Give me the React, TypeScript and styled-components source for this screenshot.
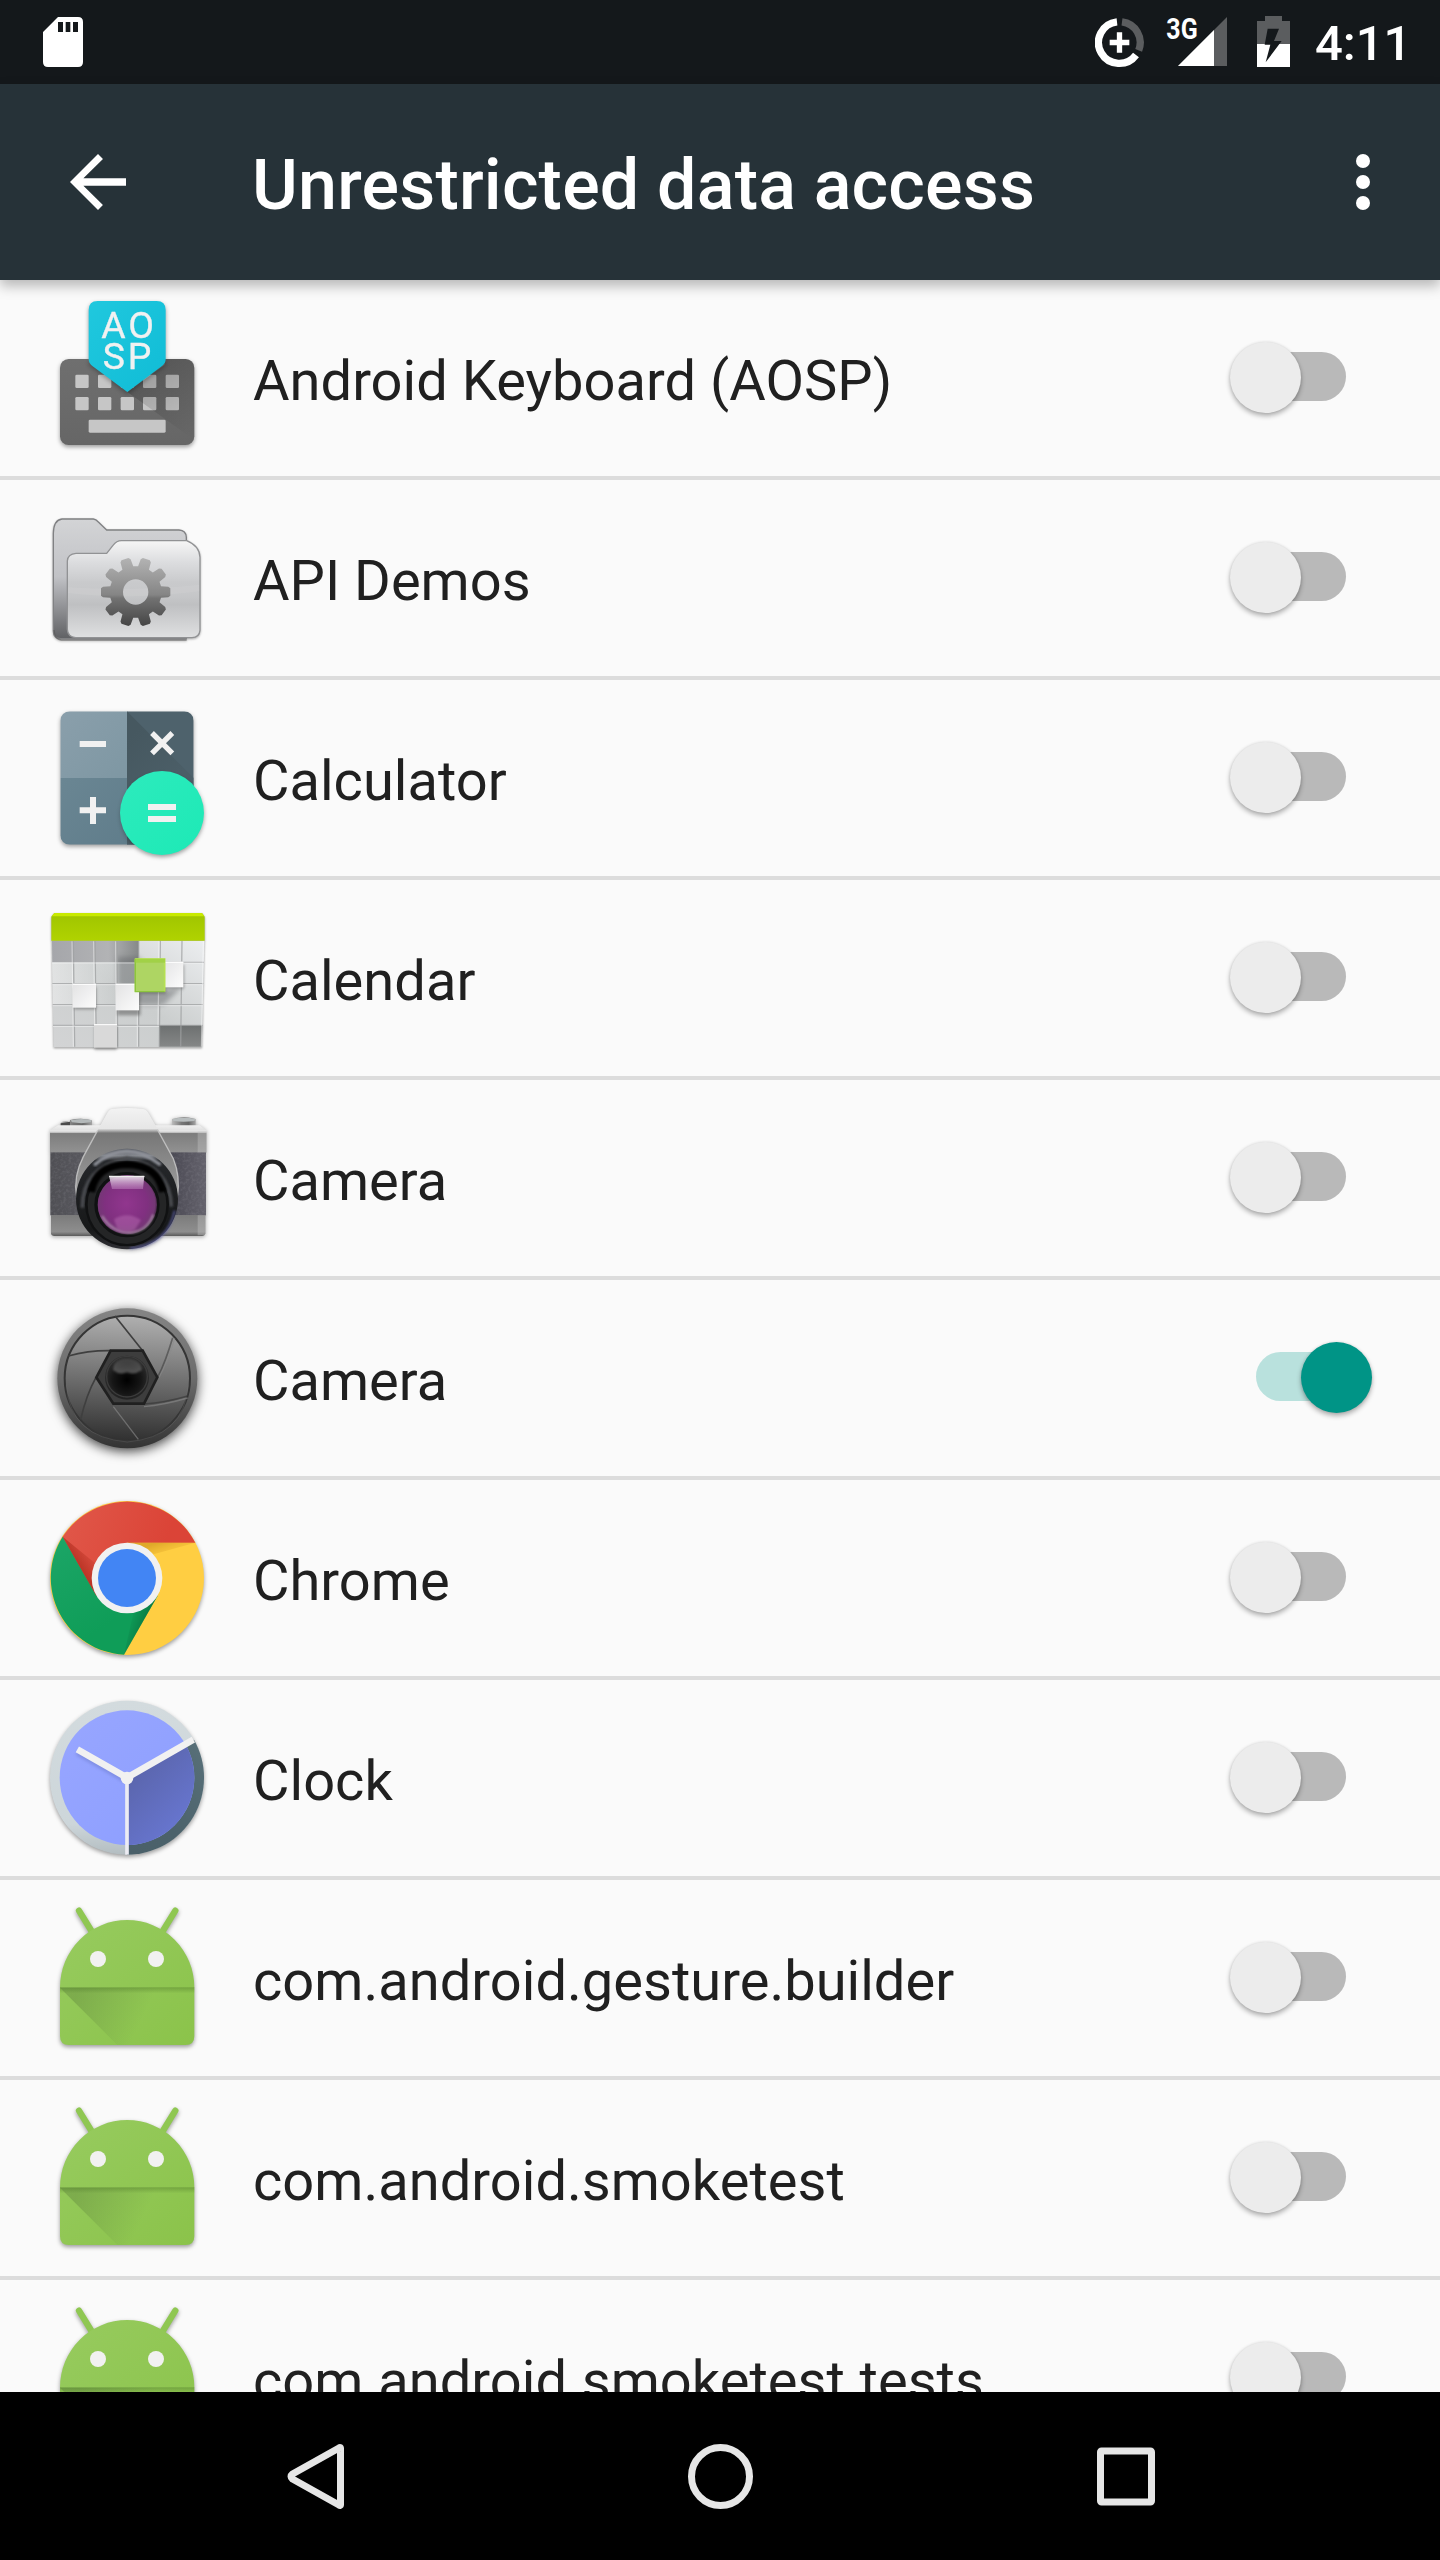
import React from 'react';
import styled, { createGlobalStyle } from 'styled-components';

const GlobalStyle = createGlobalStyle`
  * { box-sizing: border-box; }
  body { margin: 0; background: #fafafa; }
`;

const Screen = styled.div`
  width: 1440px;
  height: 2560px;
  display: flex;
  flex-direction: column;
  overflow: hidden;
  background: #fafafa;
  color: #202020;
  font-family: Roboto, 'Noto Sans', sans-serif;
`;

const StatusBar = styled.header`
  flex: none;
  height: 84px;
  display: flex;
  justify-content: space-between;
  padding-left: 43px;
  background: #14181b;
  color: #fff;
`;

const StatusIcons = styled.div`
  display: flex;
  width: 345px;
`;

const StatusGlyph = styled.svg<{ $w: number; $gap?: number }>`
  flex: none;
  width: ${(p) => p.$w}px;
  height: 84px;
  margin-right: ${(p) => p.$gap ?? 0}px;
`;

const Time = styled.span`
  font-size: 49px;
  font-weight: 500;
  line-height: 84px;
  padding-top: 2px;
`;

const Toolbar = styled.div`
  flex: none;
  position: relative;
  z-index: 1;
  height: 196px;
  display: flex;
  align-items: center;
  padding: 0 35px 0 56px;
  background: #263238;
  color: #fff;
  box-shadow: 0 6px 12px rgba(0, 0, 0, 0.27);
`;

const ToolButton = styled.button`
  flex: none;
  display: block;
  width: 84px;
  height: 84px;
  padding: 0;
  border: 0;
  background: none;
  color: inherit;
  svg { display: block; width: 84px; height: 84px; fill: currentColor; }
`;

const Title = styled.h1`
  flex: 1;
  margin: 0 0 0 112px;
  padding-top: 6px;
  font-size: 70px;
  font-weight: 500;
  letter-spacing: 0.2px;
  line-height: 82px;
  white-space: nowrap;
`;

const List = styled.ul`
  flex: 1;
  min-height: 0;
  overflow: hidden;
  margin: 0;
  padding: 0;
  list-style: none;
`;

const Row = styled.li`
  height: 200px;
  display: flex;
  align-items: center;
  padding: 0 67px 0 30px;
  border-bottom: 4px solid #dcdcdc;
`;

const AppIcon = styled.svg<{ $shadow?: string }>`
  flex: none;
  width: 200px;
  height: 196px;
  filter: ${(p) => p.$shadow ?? 'drop-shadow(0 2px 2px rgba(0,0,0,.38))'};
`;

const Label = styled.span`
  flex: 1;
  margin-left: 23px;
  padding-top: 6px;
  font-size: 56px;
  letter-spacing: 0.03px;
  line-height: 66px;
  white-space: nowrap;
`;

const Toggle = styled.button`
  flex: none;
  position: relative;
  display: flex;
  align-items: flex-start;
  justify-content: center;
  width: 144px;
  height: 72px;
  margin-bottom: 2px;
  padding: 11px 0 0;
  border: 0;
  background: none;
`;

const Track = styled.span<{ $on: boolean }>`
  width: 90px;
  height: 49px;
  border-radius: 25px;
  background: ${(p) => (p.$on ? '#b9e1dd' : '#b9b9b9')};
`;

const Thumb = styled.span<{ $on: boolean }>`
  position: absolute;
  top: 0.7px;
  ${(p) => (p.$on ? 'right: 1px' : 'left: 1px')};
  width: 71px;
  height: 71px;
  border-radius: 50%;
  background: ${(p) => (p.$on ? '#009486' : '#ececec')};
  box-shadow: 0 3px 5px rgba(0, 0, 0, 0.3), 0 0 3px rgba(0, 0, 0, 0.1);
`;

const NavBar = styled.nav`
  flex: none;
  height: 168px;
  display: flex;
  align-items: center;
  justify-content: center;
  gap: 321px;
  background: #000;
`;

const NavGlyph = styled.svg`
  width: 84px;
  height: 84px;
  fill: none;
  stroke: #e6e6e6;
  stroke-width: 7;
  stroke-linejoin: round;
`;

function gearPath(cx: number, cy: number): string {
  const parts: string[] = [];
  const at = (r: number, offset: number, a: number) => {
    const x = cx + r * Math.cos(a) - offset * Math.sin(a);
    const y = cy + r * Math.sin(a) + offset * Math.cos(a);
    return `${x.toFixed(1)} ${y.toFixed(1)}`;
  };
  for (let i = 0; i < 10; i++) {
    const a = (i * Math.PI) / 5;
    parts.push(at(76, -17, a), at(98, -16, a), at(104, -11, a), at(104, 11, a), at(98, 16, a), at(76, 17, a));
  }
  return `M${parts.join('L')}Z M${cx + 38} ${cy}a38 38 0 1 0 -76 0a38 38 0 1 0 76 0Z`;
}

const Keyboard = () => (
  <AppIcon viewBox="0 -15 600 588">
    <defs>
      <linearGradient id="kbBase" x1="0" y1="0" x2="0" y2="1"><stop offset="0" stopColor="#6f6f6f" /><stop offset="1" stopColor="#666" /></linearGradient>
      <linearGradient id="kbShade" gradientUnits="userSpaceOnUse" x1="350" y1="240" x2="480" y2="460"><stop offset="0" stopColor="#000" stopOpacity=".22" /><stop offset="1" stopColor="#000" stopOpacity="0" /></linearGradient>
      <linearGradient id="kbTag" x1="0" y1="0" x2="1" y2="1"><stop offset="0" stopColor="#20c8de" /><stop offset="1" stopColor="#10bcd6" /></linearGradient>
      <filter id="kbBlur" x="-20%" y="-20%" width="140%" height="140%"><feGaussianBlur stdDeviation="7" /></filter>
      <clipPath id="kbClip"><rect x="90" y="222" width="403" height="258" rx="26" /></clipPath>
    </defs>
    <rect x="90" y="222" width="403" height="258" rx="26" fill="url(#kbBase)" />
    <g fill="#c6c6c6">
      {[136, 204, 272, 339, 407].map((x) => <rect key={x} x={x} y="269" width="40" height="40" rx="4" />)}
      {[136, 204, 272, 339, 407].map((x) => <rect key={x} x={x} y="336" width="40" height="40" rx="4" />)}
      <rect x="176" y="404" width="231" height="39" rx="4" />
    </g>
    <g clipPath="url(#kbClip)">
      <path d="M292 321L493 465V222H404V240Z" fill="url(#kbShade)" />
      <path d="M176 227V241L292 329L407 241V227Z" fill="#000" opacity=".28" filter="url(#kbBlur)" />
    </g>
    <path d="M203 48H380Q407 48 407 75V222Q407 235 397 242L292 321L186 242Q176 235 176 222V75Q176 48 203 48Z" fill="url(#kbTag)" />
    <g fill="#f1f1f1" stroke="#f1f1f1" strokeWidth="1" fontFamily="Roboto, sans-serif" fontSize="112">
      <text x="214 295" y="160">AO</text>
      <text x="218 293" y="251">SP</text>
    </g>
  </AppIcon>
);

const Folder = () => (
  <AppIcon viewBox="0 -30 600 588" $shadow="drop-shadow(0 1px 1px rgba(0,0,0,.3))">
    <defs>
      <linearGradient id="fdBack" x1="0" y1="0" x2="0" y2="1"><stop offset="0" stopColor="#d3d4d6" /><stop offset=".48" stopColor="#c1c2c6" /><stop offset="1" stopColor="#606164" /></linearGradient>
      <linearGradient id="fdFront" x1="0" y1="0" x2="0" y2="1"><stop offset="0" stopColor="#f6f6f6" /><stop offset=".22" stopColor="#dcdddf" /><stop offset=".43" stopColor="#c9cacc" /><stop offset=".56" stopColor="#c6c7c9" /><stop offset=".66" stopColor="#bfc0c2" /><stop offset="1" stopColor="#dfe0e1" /></linearGradient>
      <linearGradient id="fdGear" gradientUnits="userSpaceOnUse" x1="0" y1="202" x2="0" y2="410"><stop offset="0" stopColor="#b4b4b4" /><stop offset=".54" stopColor="#858585" /><stop offset=".59" stopColor="#727272" /><stop offset="1" stopColor="#444" /></linearGradient>
    </defs>
    <path d="M96 87H190Q198 88 205 96L230 120H447Q468 121 469 142V446H92Q70 445 70 423V130Q71 90 96 87Z" fill="url(#fdBack)" stroke="#808183" strokeWidth="4" />
    <path d="M72 420Q73 448 94 450H470" fill="none" stroke="#555" strokeWidth="4" opacity=".6" />
    <path d="M138 190H230L249 166Q260 152 274 152H470Q509 168 510 202V421Q508 442 486 443H137Q113 441 112 418V213Q113 192 138 190Z" fill="url(#fdFront)" stroke="#919294" strokeWidth="4" />
    <path d="M114 309Q300 332 508 304V285Q300 304 114 292Z" fill="#fff" opacity=".07" />
    <path d={gearPath(317, 306)} fill="url(#fdGear)" fillRule="evenodd" />
  </AppIcon>
);

const Calculator = () => (
  <AppIcon viewBox="0 -30 600 588">
    <defs>
      <clipPath id="calcClip"><rect x="91" y="64" width="400" height="400" rx="28" /></clipPath>
      <linearGradient id="calcDark" gradientUnits="userSpaceOnUse" x1="291" y1="150" x2="420" y2="280"><stop offset="0" stopColor="#465860" /><stop offset="1" stopColor="#4b5e67" /></linearGradient>
      <linearGradient id="calcA" x1="0" y1="0" x2="1" y2="1"><stop offset="0" stopColor="#8a9fab" /><stop offset="1" stopColor="#7e97a3" /></linearGradient>
      <linearGradient id="calcB" x1="0" y1="0" x2="1" y2="1"><stop offset="0" stopColor="#6a8693" /><stop offset="1" stopColor="#607d8b" /></linearGradient>
      <linearGradient id="calcG" x1="0" y1="0" x2="1" y2="1"><stop offset="0" stopColor="#2debbd" /><stop offset="1" stopColor="#1de9b6" /></linearGradient>
      <filter id="calcBlur" x="-20%" y="-20%" width="140%" height="140%"><feGaussianBlur stdDeviation="7" /></filter>
    </defs>
    <g clipPath="url(#calcClip)">
      <rect x="91" y="64" width="200" height="200" fill="url(#calcA)" />
      <rect x="91" y="264" width="200" height="200" fill="url(#calcB)" />
      <rect x="291" y="64" width="200" height="400" fill="#4e626c" />
      <path d="M291 64L491 264V464H291Z" fill="url(#calcDark)" />
      <circle cx="396" cy="376" r="125" fill="#000" opacity=".25" filter="url(#calcBlur)" />
    </g>
    <circle cx="396" cy="369" r="126" fill="url(#calcG)" />
    <g fill="none" stroke="#f1f1f1" strokeWidth="18">
      <path d="M149 162H228M149 361H228M189 321V402M354 351H438M354 387H438" />
      <path d="M366 129L427 190M427 129L366 190" strokeWidth="16" />
    </g>
  </AppIcon>
);

const Calendar = () => (
  <AppIcon viewBox="0 -30 600 588" $shadow="drop-shadow(0 1px 1px rgba(0,0,0,.4))">
    <defs>
      <linearGradient id="calBody" x1="1" y1="0" x2="0" y2="1"><stop offset="0" stopColor="#eceef0" /><stop offset=".5" stopColor="#cbcece" /><stop offset="1" stopColor="#d3d4d5" /></linearGradient>
      <linearGradient id="calLeft" x1="0" y1="0" x2="1" y2="0"><stop offset="0" stopColor="#fff" stopOpacity=".4" /><stop offset="1" stopColor="#b5baba" stopOpacity=".45" /></linearGradient>
      <linearGradient id="calTop" x1="0" y1="0" x2="0" y2="1"><stop offset="0" stopColor="#9fc400" /><stop offset="1" stopColor="#b0d300" /></linearGradient>
      <linearGradient id="calGrey" x1="0" y1="0" x2="1" y2="0"><stop offset="0" stopColor="#a5a6aa" /><stop offset=".65" stopColor="#b2b3b5" /><stop offset="1" stopColor="#868989" /></linearGradient>
      <linearGradient id="calWhite" x1="0" y1="0" x2="1" y2="1"><stop offset="0" stopColor="#e2e2e3" /><stop offset="1" stopColor="#fcfcfc" /></linearGradient>
      <linearGradient id="calDark" x1="0" y1="0" x2="0" y2="1"><stop offset="0" stopColor="#6d7070" /><stop offset="1" stopColor="#858787" /></linearGradient>
      <filter id="calBlur" x="-30%" y="-30%" width="160%" height="160%"><feGaussianBlur stdDeviation="8" /></filter>
      <filter id="calSoft" x="-30%" y="-30%" width="160%" height="160%"><feGaussianBlur stdDeviation="4" /></filter>
    </defs>
    <path d="M65 152H523L516 472H71Z" fill="url(#calBody)" />
    <path d="M66 217H325V345H68Z" fill="url(#calLeft)" />
    <path d="M66 152H326V217H67Z" fill="url(#calGrey)" />
    <path d="M387 406H517L515 470H388Z" fill="url(#calDark)" />
    <path d="M262 200H325L400 300L456 292L400 345H335L262 281Z" fill="#5d6163" opacity=".45" filter="url(#calBlur)" />
    <g fill="none" stroke="#9fa1a2" strokeWidth="4" opacity=".75">
      <path d="M130 152L134 470M195 152L199 470M261 152L263 470M326 152V470M391 152L388 470M456 152L452 470" />
      <path d="M67 281H520M68 344H519M69 406H518" />
      <path d="M326 217H522" />
    </g>
    <g fill="none" stroke="#fff" strokeWidth="3" opacity=".5">
      <path d="M67 219H520M67 284H520M68 347H519M69 409H387" />
      <path d="M126 154L130 470M191 154L195 470M257 154L259 470M322 217V470M387 154L384 406M520 154L514 470" />
    </g>
    <g fill="#555" opacity=".5" filter="url(#calSoft)">
      <rect x="132" y="292" width="67" height="66" /><rect x="262" y="300" width="70" height="76" />
      <rect x="322" y="222" width="86" height="90" /><rect x="404" y="224" width="58" height="72" /><rect x="194" y="408" width="66" height="68" />
    </g>
    <rect x="128" y="281" width="70" height="72" fill="url(#calWhite)" />
    <rect x="257" y="281" width="70" height="80" fill="url(#calWhite)" />
    <rect x="390" y="215" width="70" height="77" fill="url(#calWhite)" />
    <rect x="192" y="402" width="69" height="71" fill="#d9d9d9" />
    <path d="M128 283H198M257 283H327M192 404H261M404 217H460" stroke="#fff" strokeWidth="3" />
    <rect x="314" y="205" width="91" height="101" fill="#aed563" />
    <path d="M316 207H404V305" fill="none" stroke="#b5e052" strokeWidth="5" />
    <path d="M316 207V305H404" fill="none" stroke="#8dc63c" strokeWidth="4" />
    <path d="M314 207H405V218H314Z" fill="#9bcf3c" opacity=".7" />
    <path d="M73 69H516L524 80V152H64V80Z" fill="url(#calTop)" />
    <path d="M73 69H516L523 79H65Z" fill="#c8ea00" />
  </AppIcon>
);

const FilmCamera = () => (
  <AppIcon viewBox="0 -30 600 588" $shadow="drop-shadow(0 1px 2px rgba(0,0,0,.35))">
    <defs>
      <linearGradient id="fcTop" x1="0" y1="0" x2="0" y2="1"><stop offset="0" stopColor="#f0f0f0" /><stop offset=".2" stopColor="#dedede" /><stop offset=".3" stopColor="#7d7d7d" /><stop offset="1" stopColor="#929292" /></linearGradient>
      <linearGradient id="fcBand" x1="0" y1="0" x2="1" y2="0"><stop offset="0" stopColor="#4f4f54" /><stop offset=".3" stopColor="#5c5b62" /><stop offset=".78" stopColor="#4b4a54" /><stop offset="1" stopColor="#64626c" /></linearGradient>
      <linearGradient id="fcPrism" gradientUnits="userSpaceOnUse" x1="0" y1="55" x2="0" y2="330"><stop offset="0" stopColor="#f2f2f2" /><stop offset=".22" stopColor="#e6e6e6" /><stop offset=".27" stopColor="#777" /><stop offset="1" stopColor="#a2a2a2" /></linearGradient>
      <linearGradient id="fcRing" x1="0" y1="0" x2="0" y2="1"><stop offset="0" stopColor="#4e5158" /><stop offset=".07" stopColor="#85888e" /><stop offset=".12" stopColor="#25272a" /><stop offset=".8" stopColor="#171819" /><stop offset="1" stopColor="#303035" /></linearGradient>
      <radialGradient id="fcGlass" cx=".48" cy=".48" r=".55"><stop offset="0" stopColor="#91368e" /><stop offset=".65" stopColor="#803080" /><stop offset=".88" stopColor="#743775" /><stop offset="1" stopColor="#2e202e" /></radialGradient>
      <linearGradient id="fcFlash" x1="0" y1="0" x2="0" y2="1"><stop offset="0" stopColor="#e5dce5" /><stop offset="1" stopColor="#c58dc6" stopOpacity=".45" /></linearGradient>
      <linearGradient id="fcFoot" x1="0" y1="0" x2="0" y2="1"><stop offset="0" stopColor="#7b7b7b" /><stop offset=".8" stopColor="#8e8e8e" /><stop offset="1" stopColor="#5a5a5a" /></linearGradient>
      <linearGradient id="fcKnob" x1="0" y1="0" x2="1" y2="0"><stop offset="0" stopColor="#bbb" /><stop offset=".4" stopColor="#777" /><stop offset=".7" stopColor="#666" /><stop offset="1" stopColor="#a5a5a5" /></linearGradient>
      <filter id="fcGrain" x="0" y="0" width="100%" height="100%"><feTurbulence type="fractalNoise" baseFrequency=".12" numOctaves="2" /><feColorMatrix values="0 0 0 0 .7 0 0 0 0 .7 0 0 0 0 .75 1.2 0 0 0 -.5" /></filter>
      <filter id="fcBlur"><feGaussianBlur stdDeviation="3" /></filter>
    </defs>
    <path d="M92 98Q105 90 120 98V90Q155 82 186 91V112H92Z" fill="url(#fcKnob)" />
    <path d="M122 91Q155 83 185 91L182 97Q155 102 126 97Z" fill="#b4b9ba" />
    <path d="M92 100L120 95V114H92Z" fill="#4a4a4a" />
    <path d="M426 87Q462 76 497 87V110H426Z" fill="url(#fcKnob)" />
    <path d="M427 87Q462 79 497 87L493 93Q460 98 430 93Z" fill="#b8bdbe" />
    <path d="M84 106H508L529 121V188H60V121Z" fill="url(#fcTop)" />
    <path d="M60 121H529V128H60Z" fill="#eee" opacity=".55" />
    <rect x="61" y="187" width="467" height="189" fill="url(#fcBand)" />
    <rect x="61" y="187" width="467" height="189" filter="url(#fcGrain)" opacity=".2" />
    <path d="M63 375H526V430Q525 438 516 438H73Q64 438 63 430Z" fill="url(#fcFoot)" />
    <path d="M503 123H528V187H503ZM503 376H525V436H503Z" fill="#ccc" opacity=".35" />
    <path d="M245 57Q291 51 340 57Q350 59 357 72L395 138L430 206Q452 260 442 330L140 330Q129 260 160 200L203 121L230 72Q237 59 245 57Z" fill="url(#fcPrism)" />
    <path d="M140 320Q129 260 160 200L203 121M442 320Q452 260 430 206L382 118" fill="none" stroke="#c9c9c9" strokeWidth="4" opacity=".85" />
    <ellipse cx="291" cy="327" rx="153" ry="151" fill="url(#fcRing)" />
    <path d="M434 362Q413 464 300 475" fill="none" stroke="#5d5fa4" strokeWidth="7" opacity=".7" filter="url(#fcBlur)" />
    <path d="M192 226Q288 142 392 225" fill="none" stroke="#8f929a" strokeWidth="10" filter="url(#fcBlur)" />
    <path d="M157 353Q156 233 291 204Q421 230 424 350" fill="none" stroke="#4a4c50" strokeWidth="11" filter="url(#fcBlur)" />
    <circle cx="291" cy="343" r="126" fill="#101112" />
    <circle cx="291" cy="344" r="108" fill="none" stroke="#2b2c2e" strokeWidth="20" opacity=".75" />
    <path d="M184 306Q196 226 291 223Q386 226 398 306" fill="none" stroke="#000" strokeWidth="22" filter="url(#fcBlur)" />
    <circle cx="292" cy="344" r="89" fill="url(#fcGlass)" />
    <path d="M216 378Q249 431 306 428Q354 422 370 374" fill="none" stroke="#c9b5c8" strokeWidth="7" opacity=".6" filter="url(#fcBlur)" />
    <path d="M252 388Q292 362 333 390L314 420Q288 429 262 417Z" fill="#c278bc" opacity=".4" filter="url(#fcBlur)" />
    <path d="M237 258H343L339 297H246Z" fill="url(#fcFlash)" />
    <path d="M237 259H343" stroke="#f0f0f0" strokeWidth="4" />
  </AppIcon>
);

const Aperture = () => (
  <AppIcon viewBox="0 -30 600 588" $shadow="drop-shadow(0 3px 6px rgba(0,0,0,.75))">
    <defs>
      <linearGradient id="apRim" x1="0" y1="0" x2="0" y2="1"><stop offset="0" stopColor="#858585" /><stop offset=".5" stopColor="#6c6c6c" /><stop offset="1" stopColor="#333" /></linearGradient>
      <linearGradient id="apFace" x1=".55" y1="0" x2=".5" y2="1"><stop offset="0" stopColor="#b0b0b0" /><stop offset=".4" stopColor="#7d7d7d" /><stop offset="1" stopColor="#303030" /></linearGradient>
      <radialGradient id="apLens" cx=".5" cy=".55" r=".5"><stop offset="0" stopColor="#000" /><stop offset=".65" stopColor="#161616" /><stop offset="1" stopColor="#2b2b2b" /></radialGradient>
      <linearGradient id="apGlint" x1="0" y1="0" x2="0" y2="1"><stop offset="0" stopColor="#777" stopOpacity=".3" /><stop offset="1" stopColor="#aaa" stopOpacity=".45" /></linearGradient>
      <filter id="apBlur"><feGaussianBlur stdDeviation="3" /></filter>
    </defs>
    <circle cx="292" cy="265" r="210" fill="url(#apRim)" />
    <circle cx="292" cy="265" r="188" fill="url(#apFace)" stroke="#353535" strokeWidth="6" />
    <path d="M109 286Q121 442 292 456Q462 442 475 286" fill="none" stroke="#777" strokeWidth="3" opacity=".3" />
    <g fill="none" stroke="#3f3f3f" strokeWidth="5">
      <path d="M255 78L338 182M115 198Q176 181 242 182M198 262Q169 314 152 388" />
      <path d="M428 143Q407 214 383 262" opacity=".6" />
    </g>
    <g fill="none" stroke="#8b8b8b" strokeWidth="4" opacity=".6">
      <path d="M434 145Q413 216 386 264M473 324Q400 345 342 350M250 350L325 448" />
      <path d="M473 318Q405 338 342 342" stroke="#333" />
    </g>
    <path d="M242 182H338L382 262L342 341H250L199 262Z" fill="#3d3d3d" stroke="#202020" strokeWidth="8" />
    <circle cx="291" cy="263" r="66" fill="url(#apLens)" />
    <circle cx="291" cy="260" r="61" fill="none" stroke="#3b3b3b" strokeWidth="4" />
    <path d="M249 240Q250 207 291 205Q332 207 336 240Q313 256 291 247Q268 256 249 240Z" fill="url(#apGlint)" filter="url(#apBlur)" />
  </AppIcon>
);

const Chrome = () => (
  <AppIcon viewBox="0 -30 600 588">
    <defs>
      <linearGradient id="chR" gradientUnits="userSpaceOnUse" x1="120" y1="80" x2="400" y2="180"><stop offset="0" stopColor="#e05648" /><stop offset="1" stopColor="#db4437" /></linearGradient>
      <linearGradient id="chG" gradientUnits="userSpaceOnUse" x1="80" y1="160" x2="240" y2="400"><stop offset="0" stopColor="#1ba566" /><stop offset="1" stopColor="#0f9d58" /></linearGradient>
      <linearGradient id="chRS" gradientUnits="userSpaceOnUse" x1="150" y1="240" x2="205" y2="205"><stop offset="0" stopColor="#a52314" stopOpacity=".65" /><stop offset="1" stopColor="#a52314" stopOpacity="0" /></linearGradient>
      <linearGradient id="chYS" gradientUnits="userSpaceOnUse" x1="390" y1="156" x2="400" y2="188"><stop offset="0" stopColor="#c58b16" stopOpacity=".55" /><stop offset="1" stopColor="#d89c20" stopOpacity=".25" /></linearGradient>
      <linearGradient id="chGS" gradientUnits="userSpaceOnUse" x1="345" y1="410" x2="300" y2="395"><stop offset="0" stopColor="#055b30" stopOpacity=".5" /><stop offset="1" stopColor="#055b30" stopOpacity=".05" /></linearGradient>
    </defs>
    <circle cx="291" cy="264" r="231" fill="#ffce42" />
    <path d="M98 140A231 231 0 0 0 282 494L383 317L291 264Z" fill="url(#chG)" />
    <path d="M98 140A231 231 0 0 1 496 158H291V264L199 317Z" fill="url(#chR)" />
    <path d="M98 140L199 317L250 264Z" fill="url(#chRS)" />
    <path d="M291 158H496L360 196Z" fill="url(#chYS)" />
    <path d="M383 317L282 494L314 350Z" fill="url(#chGS)" />
    <circle cx="291" cy="264" r="106" fill="#f1f1f1" />
    <circle cx="291" cy="264" r="87" fill="#4285f4" />
  </AppIcon>
);

const Clock = () => (
  <AppIcon viewBox="0 570 600 588">
    <defs>
      <linearGradient id="clRing" x1="0" y1="0" x2="0" y2="1"><stop offset="0" stopColor="#d3dbde" /><stop offset=".8" stopColor="#cdd6da" /><stop offset="1" stopColor="#b3bdc1" /></linearGradient>
      <linearGradient id="clDark" x1="1" y1="0" x2="0" y2="1"><stop offset="0" stopColor="#587079" /><stop offset=".6" stopColor="#4c626b" /><stop offset="1" stopColor="#4a6069" /></linearGradient>
      <linearGradient id="clShade" gradientUnits="userSpaceOnUse" x1="300" y1="870" x2="430" y2="1000"><stop offset="0" stopColor="#5b66ae" /><stop offset="1" stopColor="#6674cc" /></linearGradient>
      <linearGradient id="clFace" x1="0" y1="0" x2="1" y2="1"><stop offset="0" stopColor="#98a6ff" /><stop offset="1" stopColor="#8c9eff" /></linearGradient>
      <filter id="clBlur"><feGaussianBlur stdDeviation="5" /></filter>
    </defs>
    <circle cx="291" cy="863" r="231" fill="url(#clRing)" />
    <path d="M291 863L492 749A231 231 0 0 1 291 1094Z" fill="url(#clDark)" />
    <circle cx="291" cy="863" r="202" fill="url(#clFace)" />
    <path d="M291 863L466.700 763.400A202 202 0 0 1 291 1065Z" fill="url(#clShade)" />
    <path d="M142 786L291 872" stroke="#4a569c" strokeWidth="20" opacity=".25" filter="url(#clBlur)" />
    <path d="M291 863V1094" stroke="#ececf3" strokeWidth="11" />
    <path d="M142 778L291 863L490 749" fill="none" stroke="#f1f1f1" strokeWidth="20" />
    <circle cx="291" cy="864" r="19" fill="#f1f1f1" />
  </AppIcon>
);

const Robot = () => (
  <AppIcon viewBox="0 -30 600 588">
    <defs>
      <linearGradient id="rbBody" x1="0" y1="0" x2="1" y2="1"><stop offset="0" stopColor="#97cb5f" /><stop offset="1" stopColor="#8bc34a" /></linearGradient>
      <linearGradient id="rbShade" gradientUnits="userSpaceOnUse" x1="150" y1="290" x2="340" y2="380"><stop offset="0" stopColor="#5d823b" stopOpacity=".4" /><stop offset="1" stopColor="#5d823b" stopOpacity="0" /></linearGradient>
      <linearGradient id="rbSeam" x1="0" y1="0" x2="0" y2="1"><stop offset="0" stopColor="#4a7227" stopOpacity=".4" /><stop offset="1" stopColor="#4a7227" stopOpacity="0" /></linearGradient>
    </defs>
    <path d="M147 62L190 132M436 62L393 132" fill="none" stroke="#8fc752" strokeWidth="19" strokeLinecap="round" />
    <path d="M90 292A201.500 202 0 0 1 493 292V439Q493 465 467 465H116Q90 465 90 439Z" fill="url(#rbBody)" />
    <path d="M90 293H493V465H262Z" fill="url(#rbShade)" />
    <rect x="90" y="292" width="403" height="18" fill="url(#rbSeam)" />
    <g fill="#f1f1f1"><circle cx="204" cy="207" r="24" /><circle cx="378" cy="207" r="24" /></g>
  </AppIcon>
);

interface AppEntry {
  name: string;
  Icon: React.FC;
  on?: boolean;
}

const apps: AppEntry[] = [
  { name: 'Android Keyboard (AOSP)', Icon: Keyboard },
  { name: 'API Demos', Icon: Folder },
  { name: 'Calculator', Icon: Calculator },
  { name: 'Calendar', Icon: Calendar },
  { name: 'Camera', Icon: FilmCamera },
  { name: 'Camera', Icon: Aperture, on: true },
  { name: 'Chrome', Icon: Chrome },
  { name: 'Clock', Icon: Clock },
  { name: 'com.android.gesture.builder', Icon: Robot },
  { name: 'com.android.smoketest', Icon: Robot },
  { name: 'com.android.smoketest.tests', Icon: Robot },
];

export default function App() {
  const [enabled, setEnabled] = React.useState(() => apps.map((a) => !!a.on));
  const flip = (i: number) => setEnabled((prev) => prev.map((v, j) => (j === i ? !v : v)));

  return (
    <Screen>
      <GlobalStyle />
      <StatusBar>
        <StatusGlyph $w={40} viewBox="129 0 120 252">
          <path fill="#fff" fillRule="evenodd" d="M174 51H234Q249 51 249 66V186Q249 201 234 201H144Q129 201 129 186V96ZM174 66V96H189V66ZM197 66V96H211V66ZM219 66V96H234V66Z" />
        </StatusGlyph>
        <StatusIcons>
          <StatusGlyph $w={49} $gap={22} viewBox="105 0 147 252" fill="none" strokeWidth="22">
            <path stroke="#5b5d5f" d="M186 65.500A62.500 62.500 0 0 1 236 151" />
            <path stroke="#fff" d="M171 65.500A62.500 62.500 0 1 0 228 165" />
            <path stroke="#fff" strokeWidth="16" d="M149 127.500H208M178.500 97V158" />
          </StatusGlyph>
          <StatusGlyph $w={61} $gap={30} viewBox="318 0 183 252">
            <path fill="#5b5d5f" d="M354 198H501V51Z" />
            <path fill="#fff" d="M354 198H462V90Z" />
            <text x="319" y="117" fill="#fff" fontSize="87" fontWeight="700" textLength="94" lengthAdjust="spacingAndGlyphs">3G</text>
          </StatusGlyph>
          <StatusGlyph $w={33} $gap={25} viewBox="591 0 99 252">
            <path fill="#5b5d5f" d="M591 63H615V48H666V63H690V132H591Z" />
            <path fill="#fff" d="M591 132H690V201H591Z" />
            <path fill="#14181b" d="M623 86H657L642 123H665L617 187L631 134H614Z" />
          </StatusGlyph>
          <Time>4:11</Time>
        </StatusIcons>
      </StatusBar>

      <Toolbar>
        <ToolButton aria-label="Back">
          <svg viewBox="0 0 24 24"><path d="M20 10.900H7.830l5.590-5.490L12 4l-8 8 8 8 1.410-1.410L7.830 13.100H20z" /></svg>
        </ToolButton>
        <Title>Unrestricted data access</Title>
        <ToolButton aria-label="More">
          <svg viewBox="0 0 24 24"><circle cx="12" cy="6" r="2" /><circle cx="12" cy="12" r="2" /><circle cx="12" cy="18" r="2" /></svg>
        </ToolButton>
      </Toolbar>

      <List>
        {apps.map(({ name, Icon }, i) => (
          <Row key={i}>
            <Icon />
            <Label>{name}</Label>
            <Toggle role="switch" aria-checked={enabled[i]} aria-label={name} onClick={() => flip(i)}>
              <Track $on={enabled[i]} />
              <Thumb $on={enabled[i]} />
            </Toggle>
          </Row>
        ))}
      </List>

      <NavBar>
        <NavGlyph viewBox="0 0 84 84"><path d="M67.500 14.500V70.500Q67.500 72 66 71L19.500 45Q16.500 42.500 19.500 40L66 14Q67.500 13 67.500 14.500Z" /></NavGlyph>
        <NavGlyph viewBox="0 0 84 84"><circle cx="42.500" cy="42.500" r="29" /></NavGlyph>
        <NavGlyph viewBox="0 0 84 84"><rect x="17.500" y="17" width="51" height="51" rx="1" /></NavGlyph>
      </NavBar>
    </Screen>
  );
}
